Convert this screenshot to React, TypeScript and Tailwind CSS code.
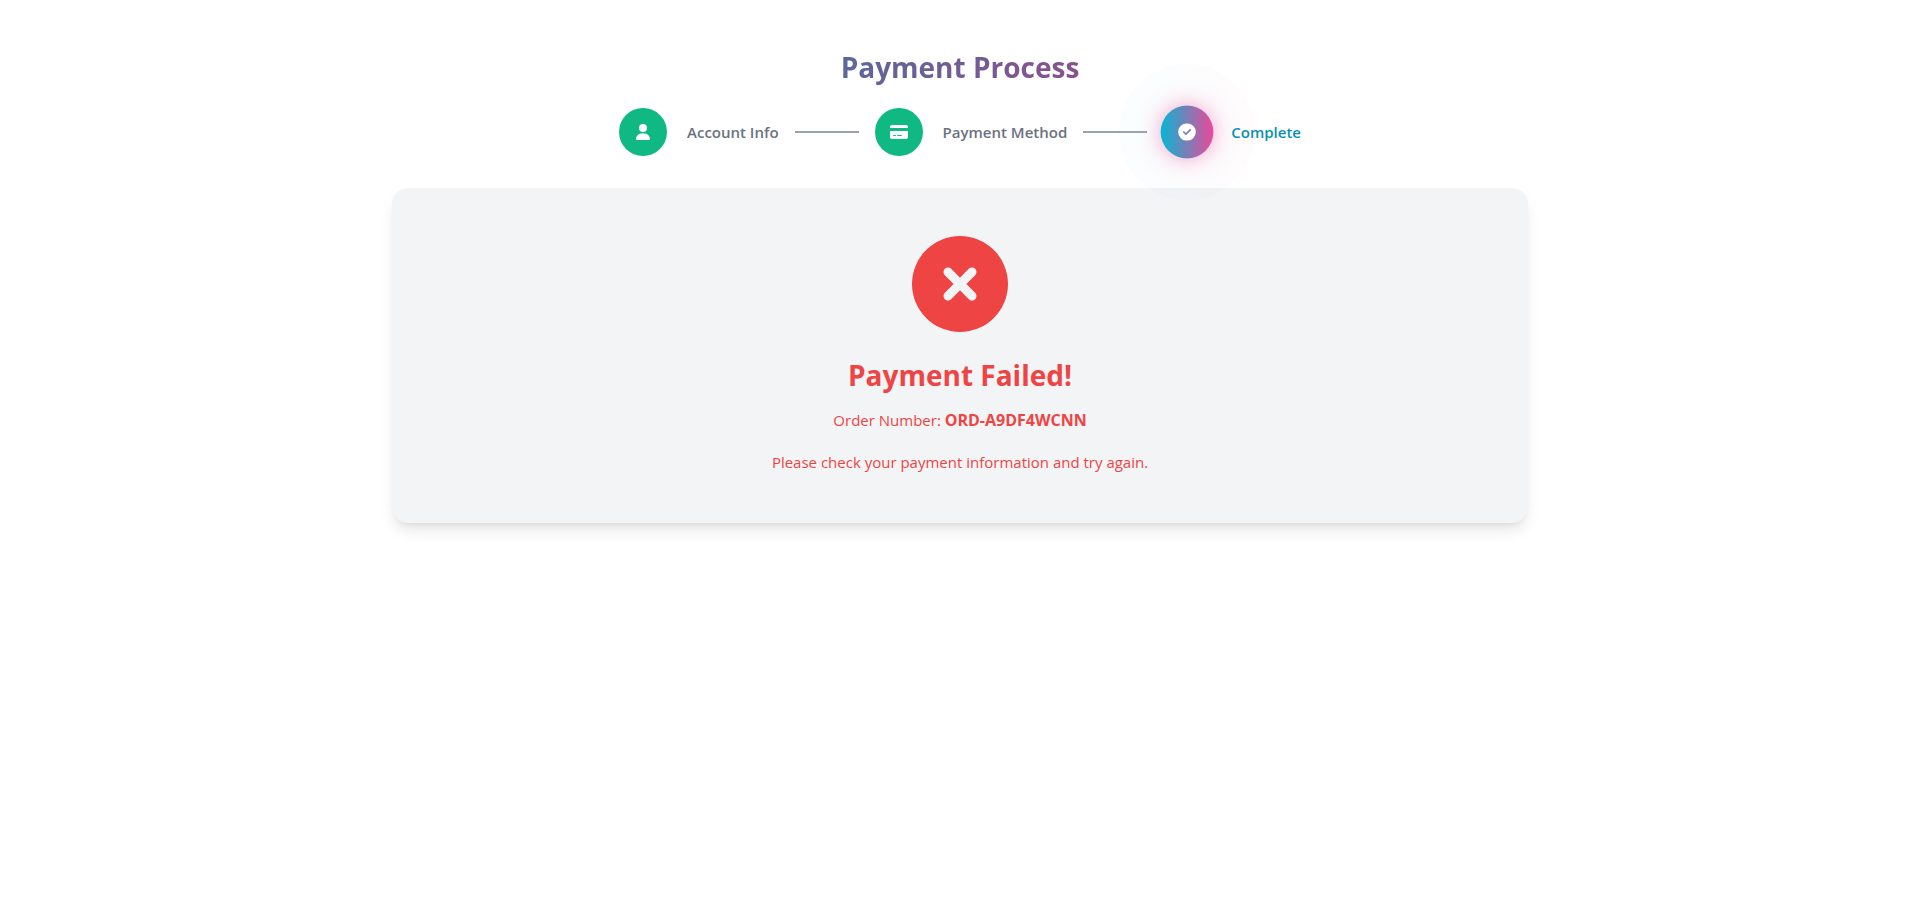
import React from 'react';
import { FaUser, FaCreditCard, FaCircleCheck, FaCircleXmark } from 'react-icons/fa6';

const steps = [
  { label: 'Account Info', icon: FaUser },
  { label: 'Payment Method', icon: FaCreditCard },
  { label: 'Complete', icon: FaCircleCheck },
];

const currentStep = 2;

function StepIndicator() {
  return (
    <ol className="mb-8 flex items-center justify-center gap-4">
      {steps.map(({ label, icon: Icon }, index) => {
        const active = index === currentStep;
        return (
          <React.Fragment key={label}>
            {index > 0 && <li aria-hidden="true" className="h-0.5 w-16 bg-[#9ca3af]" />}
            <li className="flex items-center gap-5" aria-current={active ? 'step' : undefined}>
              {active ? (
                <div className="relative size-12">
                  {/* expanding pulse ring */}
                  <div className="absolute -inset-11 rounded-full bg-linear-to-r/srgb from-[#06b6d4] to-[#ec4899] opacity-2" />
                  <div className="relative flex size-12 scale-110 items-center justify-center rounded-full bg-linear-to-r/srgb from-[#06b6d4] to-[#ec4899] text-white shadow-[0_0_20px_rgba(236,72,153,0.5)]">
                    <Icon className="h-4 w-[18px]" />
                  </div>
                </div>
              ) : (
                <div className="flex size-12 items-center justify-center rounded-full bg-[#10b981] text-white">
                  <Icon className="h-4 w-[18px]" />
                </div>
              )}
              <span
                className={
                  active
                    ? 'text-[15px] font-semibold text-[#0891b2]'
                    : 'text-[15px] font-semibold text-[#6b7280]'
                }
              >
                {label}
              </span>
            </li>
          </React.Fragment>
        );
      })}
    </ol>
  );
}

function PaymentFailed({ orderNumber }: { orderNumber: string }) {
  return (
    <section className="flex flex-col items-center rounded-2xl bg-[#f3f4f6] p-12 text-center text-[15px] leading-[26px] text-[#ef4444] shadow-[0_10px_15px_-3px_rgba(0,0,0,0.1),0_4px_6px_-4px_rgba(0,0,0,0.1)]">
      <FaCircleXmark className="size-24" />
      <h2 className="mt-6 text-[28px] leading-[38px] font-bold">Payment Failed!</h2>
      <p className="mt-[13px]">
        Order Number: <strong className="text-base leading-none font-bold">{orderNumber}</strong>
      </p>
      <p className="mt-4">Please check your payment information and try again.</p>
    </section>
  );
}

export default function App() {
  return (
    <div className="min-h-screen bg-white px-4 py-12 font-['Segoe_UI','Open_Sans',sans-serif]">
      <main className="mx-auto max-w-[1136px]">
        <h1 className="mb-[22px] bg-linear-to-r/srgb from-[#0891b2] to-[#db2777] bg-clip-text text-center text-[28px] leading-[38px] font-bold text-transparent">
          Payment Process
        </h1>
        <StepIndicator />
        <PaymentFailed orderNumber="ORD-A9DF4WCNN" />
      </main>
    </div>
  );
}
